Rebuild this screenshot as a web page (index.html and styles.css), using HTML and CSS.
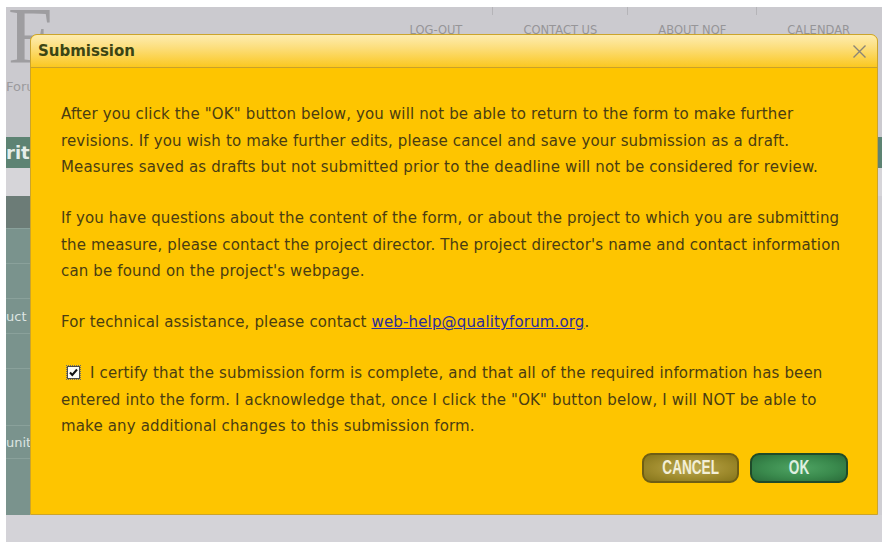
FILE: index.html
```html
<!DOCTYPE html>
<html lang="en">
<head>
<meta charset="utf-8">
<title>Submission</title>
<link rel="stylesheet" href="styles.css">
</head>
<body>
<div class="page">
  <header class="site-head">
    <div class="brand">
      <span class="brand-mark">F</span>
      <span class="brand-tag">Forum</span>
    </div>
    <nav class="top-nav">
      <a href="#">LOG-OUT</a>
      <a href="#">CONTACT US</a>
      <a href="#">ABOUT NQF</a>
      <a href="#">CALENDAR</a>
    </nav>
  </header>
  <div class="title-band"><span>rities</span></div>
  <div class="sub-band"></div>
  <div class="layout">
    <aside class="side">
      <div class="side-head"></div>
      <div class="side-row"></div>
      <div class="side-row"></div>
      <div class="side-row"><span>uct</span></div>
      <div class="side-row"></div>
      <div class="side-row tall"></div>
      <div class="side-row short"><span>unit</span></div>
      <div class="side-row tall"></div>
    </aside>
    <main class="content"></main>
  </div>
  <div class="foot-band"></div>
</div>

<div class="dialog" role="dialog" aria-labelledby="dlg-title">
  <div class="dialog-head">
    <span class="dialog-title" id="dlg-title">Submission</span>
    <button class="dialog-close" type="button" aria-label="Close">
      <svg width="15" height="15" viewBox="0 0 15 15"><path d="M1.5 1.5 L13.5 13.5 M13.5 1.5 L1.5 13.5" stroke="#8a8578" stroke-width="1.4" fill="none"/></svg>
    </button>
  </div>
  <div class="dialog-body">
    <p>After you click the "OK" button below, you will not be able to return to the form to make further revisions. If you wish to make further edits, please cancel and save your submission as a draft. Measures saved as drafts but not submitted prior to the deadline will not be considered for review.</p>
    <p>If you have questions about the content of the form, or about the project to which you are submitting the measure, please contact the project director. The project director's name and contact information can be found on the project's webpage.</p>
    <p>For technical assistance, please contact <a href="#">web-help@qualityforum.org</a>.</p>
    <p class="certify"><span class="check"><svg width="13" height="13" viewBox="0 0 13 13"><rect x="0.5" y="0.5" width="12" height="12" fill="#fbfbf6" stroke="#4a4a4a"/><path d="M3 6.5 L5.3 9 L10 3.5" stroke="#111" stroke-width="2" fill="none"/></svg></span>I certify that the submission form is complete, and that all of the required information has been entered into the form. I acknowledge that, once I click the "OK" button below, I will NOT be able to make any additional changes to this submission form.</p>
  </div>
  <div class="dialog-actions">
    <button class="btn btn-cancel" type="button"><span>CANCEL</span></button>
    <button class="btn btn-ok" type="button"><span>OK</span></button>
  </div>
</div>
</body>
</html>
```

FILE: styles.css
```css
html, body {
  margin: 0;
  padding: 0;
}

body {
  background: #ffffff;
  padding: 7px 0 0 6px;
  font-family: "DejaVu Sans", Verdana, sans-serif;
  overflow: hidden;
  height: 542px;
  box-sizing: border-box;
}

/* page behind the dialog */
.page {
  background: #cdccd1;
  display: flex;
  flex-direction: column;
  height: 535px;
}

.site-head {
  height: 130px;
  display: flex;
  align-items: flex-start;
  background: #cbcacf;
}

.brand {
  display: flex;
  flex-direction: column;
  width: 90px;
}

.brand-mark {
  font-family: "Liberation Serif", serif;
  font-size: 80px;
  line-height: 58px;
  color: #9e9da0;
  margin-left: 2px;
}

.brand-tag {
  margin-top: 14px;
  font-size: 13px;
  color: #9b9a9d;
  white-space: nowrap;
}

.top-nav {
  margin-left: auto;
  display: flex;
  gap: 61px;
  padding: 17px 32px 0 0;
}

.top-nav a {
  position: relative;
  font-size: 11.5px;
  color: #969598;
  text-decoration: none;
  line-height: 12px;
}

.top-nav a + a::before {
  content: "";
  position: absolute;
  left: -31px;
  top: -17px;
  width: 1px;
  height: 8px;
  background: #b5b4b8;
}

.title-band {
  height: 31px;
  background: #5d8373;
  color: #e6eee9;
  font-weight: bold;
  font-size: 18px;
  line-height: 31px;
  overflow: hidden;
}

.sub-band {
  height: 28px;
  background: #d6d5d9;
}

.layout {
  display: flex;
  height: 319px;
}

.side {
  width: 24px;
  display: flex;
  flex-direction: column;
  background: #7a938d;
}

.side-head {
  height: 32px;
  background: #6c7c77;
}

.side-row {
  height: 35px;
  border-top: 1px solid #8aa19b;
  box-sizing: border-box;
  display: flex;
  align-items: center;
  white-space: nowrap;
  color: #dde5e2;
  font-size: 13px;
}

.side-row:first-of-type {
  border-top: 0;
}

.side-row.tall {
  height: 57px;
}

.side-row.short {
  height: 33px;
}

.content {
  flex: 1;
  background: #cfced3;
}

.foot-band {
  flex: 1;
  background: #d4d3d8;
}

/* submission dialog */
.dialog {
  position: absolute;
  left: 30px;
  top: 34px;
  width: 848px;
  height: 481px;
  box-sizing: border-box;
  border: 1px solid #cba42c;
  border-radius: 7px 7px 0 0;
  background: #fec500;
  display: flex;
  flex-direction: column;
}

.dialog-head {
  height: 33px;
  flex: none;
  box-sizing: border-box;
  border-bottom: 1px solid #c9a12a;
  border-radius: 6px 6px 0 0;
  background: linear-gradient(#fdecb0 0%, #fcde7c 40%, #fbc820 100%);
  display: flex;
  align-items: center;
  justify-content: space-between;
  padding: 0 10px 0 7px;
}

.dialog-title {
  font-size: 15px;
  font-weight: bold;
  color: #3b4514;
}

.dialog-close {
  border: 0;
  background: none;
  padding: 0;
  width: 15px;
  height: 15px;
  display: flex;
  cursor: pointer;
}

.dialog-body {
  padding: 33px 30px 0 30px;
  font-size: 15px;
  letter-spacing: 0.15px;
  line-height: 26.5px;
  color: #4a3d12;
}

.dialog-body p {
  margin: 0 0 24.5px 0;
}

.dialog-body p.certify {
  margin-bottom: 0;
}

.dialog-body a {
  color: #2c2c9c;
  text-decoration: underline;
}

.check {
  display: inline-block;
  vertical-align: -1px;
  margin: 0 10px 0 6px;
  outline: 1px dotted #6a6a6a;
  outline-offset: 0;
  line-height: 0;
}

.dialog-actions {
  display: flex;
  justify-content: flex-end;
  gap: 11px;
  margin-top: 13px;
  padding-right: 29px;
}

.btn {
  height: 30px;
  border-radius: 9px;
  box-sizing: border-box;
  font-family: "Liberation Sans", Arial, sans-serif;
  font-weight: bold;
  font-size: 20px;
  padding: 0;
  display: flex;
  align-items: center;
  justify-content: center;
  cursor: pointer;
}

.btn span {
  display: inline-block;
  transform: scaleX(0.68);
}

.btn-cancel {
  width: 97px;
  border: 2px solid #6f5e14;
  background: radial-gradient(ellipse at 50% 50%, #bba956 0%, #a08c2e 55%, #85741a 100%);
  color: #f3efd6;
}

.btn-ok {
  width: 98px;
  border: 2px solid #1f4b29;
  background: radial-gradient(ellipse at 50% 50%, #4fa463 0%, #3a8a4d 55%, #2a6c3a 100%);
  color: #dff0e0;
}
```
